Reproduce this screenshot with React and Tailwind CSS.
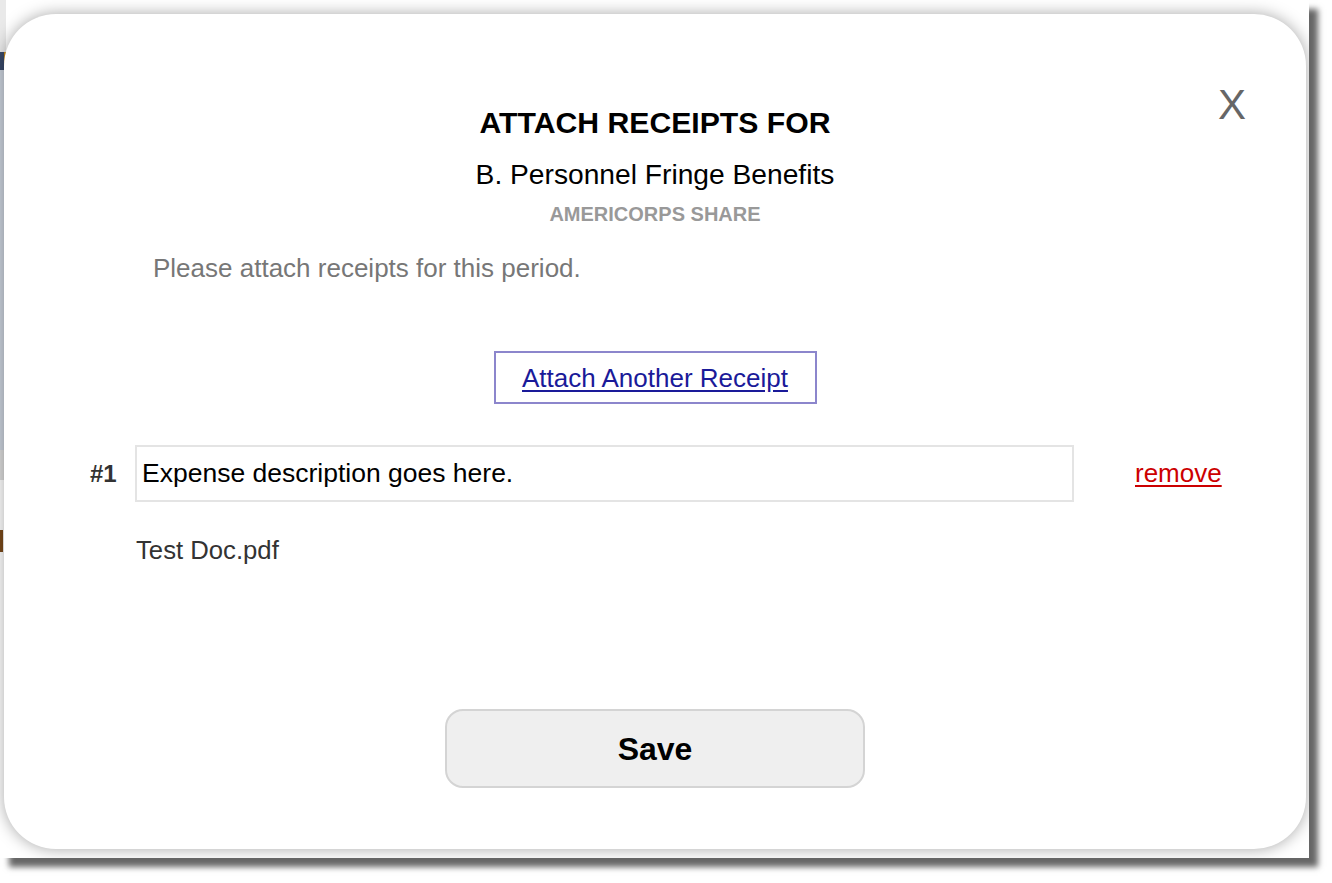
import React from 'react';

const font = { fontFamily: '"Liberation Sans", Arial, Helvetica, sans-serif' };

function BackdropStrip() {
  // sliver of the page that peeks out behind the modal on the left
  return (
    <div className="flex flex-col w-[6px] h-full">
      <div className="h-[52px] bg-[#e9e9e9]" />
      <div className="h-[18px] bg-[#3a4a6a] border-r-2 border-[#c98a1c]" />
      <div className="h-[380px] bg-[#ccd3de]" />
      <div className="h-[30px] bg-[#dcdcdc]" />
      <div className="h-[50px] bg-white" />
      <div className="h-[22px] bg-[#7a4a1a] w-[3px]" />
      <div className="flex-1 bg-white" />
    </div>
  );
}

export default function App() {
  return (
    <div className="w-[1332px] h-[883px] bg-white" style={font}>
      <div className="relative w-[1309px] h-[858px] bg-white overflow-hidden shadow-[9px_9px_6px_rgba(0,0,0,0.6)]">
        <BackdropStrip />

        {/* modal */}
        <div className="absolute left-[4px] top-[14px] w-[1302px] h-[835px] bg-white rounded-[52px] shadow-[0_0_16px_rgba(0,0,0,0.35)]">
          <button className="absolute right-[60px] top-[70px] text-[42px] leading-none text-[#666] font-normal">
            X
          </button>

          <div className="flex flex-col pt-[92px]">
            <h1 className="text-center text-[30.2px] leading-[34px] font-bold text-black">
              ATTACH RECEIPTS FOR
            </h1>
            <div className="mt-[18px] text-center text-[28.2px] leading-[32px] text-black">
              B. Personnel Fringe Benefits
            </div>
            <div className="mt-[12px] text-center text-[20px] leading-[24px] font-bold text-[#999]">
              AMERICORPS SHARE
            </div>
            <p className="mt-[27px] pl-[149px] text-[26px] leading-[30px] text-[#777]">
              Please attach receipts for this period.
            </p>

            <div className="mt-[68px] flex justify-center">
              <div className="w-[323px] h-[53px] border-2 border-[#8c86cc] flex items-center justify-center">
                <a href="#" className="text-[26px] leading-none text-[#1a1a99] underline underline-offset-[3px]">
                  Attach Another Receipt
                </a>
              </div>
            </div>

            <div className="mt-[41px] flex items-center">
              <div className="w-[131px] pl-[86px] text-[24px] font-bold text-[#333]">#1</div>
              <div className="w-[939px] h-[57px] border-2 border-[#e4e4e4] flex items-center pl-[5px] text-[26.5px] text-black">
                Expense description goes here.
              </div>
              <a href="#" className="ml-[61px] text-[26px] text-[#cc0000] underline underline-offset-[3px]">
                remove
              </a>
            </div>

            <div className="mt-[33px] pl-[132px] text-[25.7px] leading-[30px] text-[#333]">
              Test Doc.pdf
            </div>

            <div className="mt-[144px] flex justify-center">
              <button className="w-[420px] h-[79px] rounded-[18px] bg-[#efefef] border-2 border-[#d4d4d4] text-[32px] font-bold text-black">
                Save
              </button>
            </div>
          </div>
        </div>
      </div>
    </div>
  );
}
